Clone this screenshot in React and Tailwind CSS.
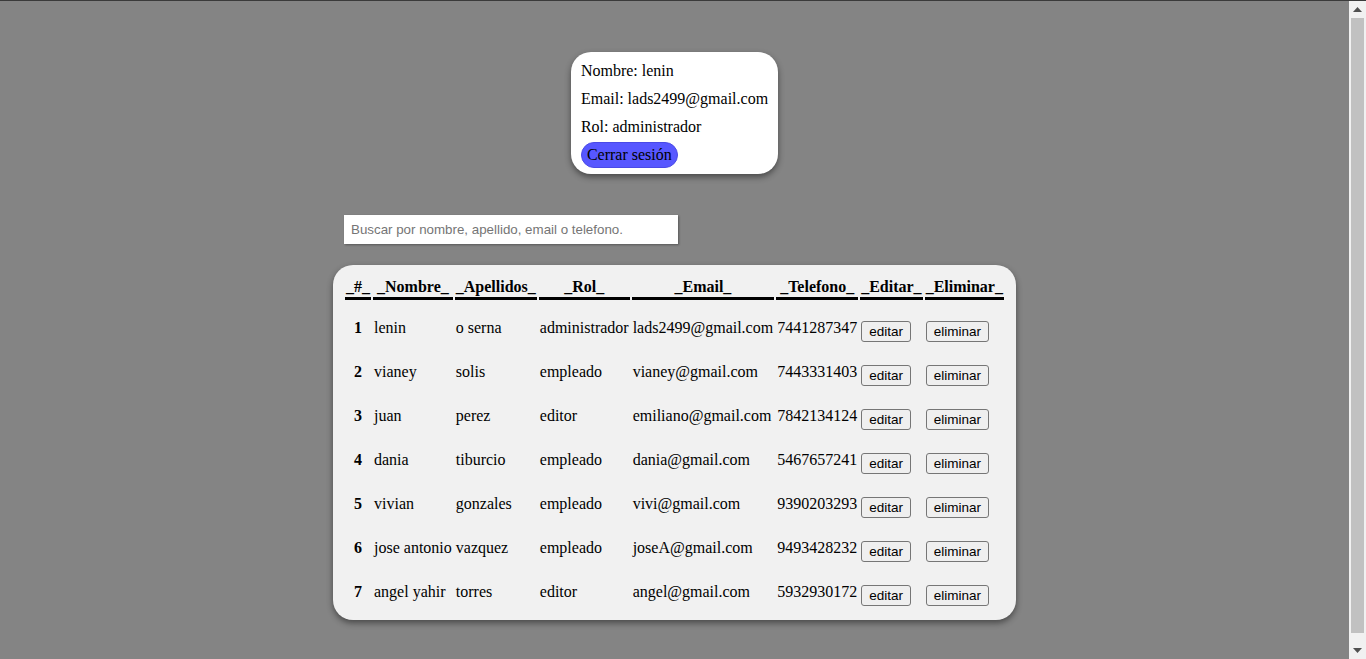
import React from 'react';

const usuarios = [
  { id: 1, nombre: 'lenin', apellidos: 'o serna', rol: 'administrador', email: 'lads2499@gmail.com', telefono: '7441287347' },
  { id: 2, nombre: 'vianey', apellidos: 'solis', rol: 'empleado', email: 'vianey@gmail.com', telefono: '7443331403' },
  { id: 3, nombre: 'juan', apellidos: 'perez', rol: 'editor', email: 'emiliano@gmail.com', telefono: '7842134124' },
  { id: 4, nombre: 'dania', apellidos: 'tiburcio', rol: 'empleado', email: 'dania@gmail.com', telefono: '5467657241' },
  { id: 5, nombre: 'vivian', apellidos: 'gonzales', rol: 'empleado', email: 'vivi@gmail.com', telefono: '9390203293' },
  { id: 6, nombre: 'jose antonio', apellidos: 'vazquez', rol: 'empleado', email: 'joseA@gmail.com', telefono: '9493428232' },
  { id: 7, nombre: 'angel yahir', apellidos: 'torres', rol: 'editor', email: 'angel@gmail.com', telefono: '5932930172' },
];

const headers = ['_#_', '_Nombre_', '_Apellidos_', '_Rol_', '_Email_', '_Telefono_', '_Editar_', '_Eliminar_'];

const serif = { fontFamily: '"Liberation Serif", "Times New Roman", serif' };

const SmallButton = ({ children }) => (
  <button className="block mt-[6px] h-[21px] px-[7px] rounded-[3px] border border-[#767676] bg-[#efefef] text-[13.5px] leading-[15px] text-black font-['Liberation_Sans',Arial,sans-serif]">
    {children}
  </button>
);

/* barra de scroll del navegador */
const Scrollbar = () => (
  <div className="w-[17px] shrink-0 bg-[#f1f1f1] flex flex-col">
    <div className="h-[17px] flex items-center justify-center">
      <svg width="9" height="5" viewBox="0 0 9 5"><path d="M0 5 L4.5 0 L9 5 Z" fill="#505050" /></svg>
    </div>
    <div className="mx-[2px] h-[615px] bg-[#c1c1c1]" />
    <div className="flex-1" />
    <div className="h-[17px] flex items-center justify-center">
      <svg width="9" height="5" viewBox="0 0 9 5"><path d="M0 0 L9 0 L4.5 5 Z" fill="#505050" /></svg>
    </div>
  </div>
);

export default function App() {
  return (
    <div className="h-[659px] overflow-hidden flex border-t border-[#3a3a3a] bg-[#848484]">
      <div className="flex-1 text-black text-[16px]" style={serif}>
        <div className="flex flex-col items-center pt-[51px]">
          {/* ── Perfil ── */}
          <div className="bg-white rounded-[20px] px-[10px] pt-[10px] pb-[6px] shadow-[0_3px_6px_rgba(0,0,0,0.45)] leading-[18px]">
            <p>Nombre: lenin</p>
            <p className="mt-[10px]">Email: lads2499@gmail.com</p>
            <p className="mt-[10px]">Rol: administrador</p>
            <button className="mt-[6px] h-[26px] px-[5px] rounded-full bg-[#5757ff] border border-[#4a4ae6] text-black text-[16px]" style={serif}>
              Cerrar sesión
            </button>
          </div>

          {/* ── Buscador + tabla ── */}
          <div className="mt-[41px] flex flex-col">
            <input
              type="text"
              placeholder="Buscar por nombre, apellido, email o telefono."
              className="ml-[11px] w-[334px] h-[29px] px-[7px] bg-white text-[13.33px] placeholder:text-[#757575] shadow-[1px_1px_2px_rgba(0,0,0,0.35)] outline-none font-['Liberation_Sans',Arial,sans-serif]"
            />

            <div className="mt-[21px] bg-[#f1f1f1] rounded-[20px] px-[10px] pt-[10px] pb-[5px] shadow-[0_3px_6px_rgba(0,0,0,0.45)]">
              <table className="border-separate border-spacing-[2px] leading-[18px]">
                <thead>
                  <tr>
                    {headers.map((h) => (
                      <th key={h} className="p-[1px] border-b-[3px] border-black font-bold text-center">
                        {h}
                      </th>
                    ))}
                  </tr>
                  <tr className="h-[3px]">
                    <td colSpan={8} className="p-0" />
                  </tr>
                </thead>
                <tbody>
                  {usuarios.map((u) => (
                    <tr key={u.id} className="h-[42px]">
                      <th className="p-[1px] font-bold text-center align-middle">{u.id}</th>
                      <td className="p-[1px] align-middle">{u.nombre}</td>
                      <td className="p-[1px] align-middle">{u.apellidos}</td>
                      <td className="p-[1px] align-middle">{u.rol}</td>
                      <td className="p-[1px] align-middle">{u.email}</td>
                      <td className="p-[1px] align-middle">{u.telefono}</td>
                      <td className="p-[1px] align-middle">
                        <SmallButton>editar</SmallButton>
                      </td>
                      <td className="p-[1px] align-middle">
                        <SmallButton>eliminar</SmallButton>
                      </td>
                    </tr>
                  ))}
                </tbody>
              </table>
            </div>
          </div>
        </div>
      </div>
      <Scrollbar />
    </div>
  );
}
